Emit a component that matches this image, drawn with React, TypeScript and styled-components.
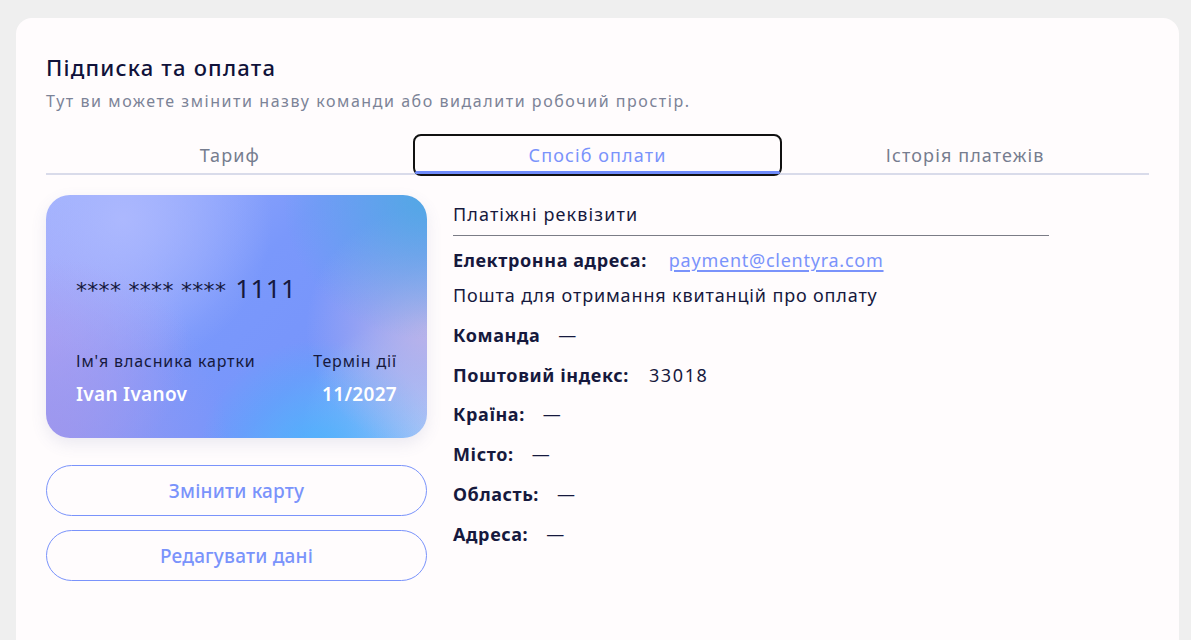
import React from "react";
import styled, { createGlobalStyle } from "styled-components";

const Global = createGlobalStyle`
  html, body { margin: 0; padding: 0; background: #efefef; }
  body { font-family: "Noto Sans", "Open Sans", sans-serif; }
  * { box-sizing: border-box; }
`;

const Page = styled.div`
  padding: 18px 12px 0 16px;
  height: 640px;
  overflow: hidden;
`;

const Panel = styled.section`
  background: #fffcfd;
  border-radius: 16px;
  padding: 34px 30px 60px 30px;
  min-height: 700px;
`;

const Title = styled.h1`
  margin: 0;
  font-size: 22px;
  font-weight: 500;
  color: #10123a;
  line-height: 30px;
  letter-spacing: 1.2px;
`;

const Subtitle = styled.p`
  margin: 8px 0 0;
  font-size: 16px;
  color: #7c8397;
  line-height: 22px;
  letter-spacing: 1.55px;
`;

const Tabs = styled.div`
  margin-top: 22px;
  display: grid;
  grid-template-columns: 1fr 1fr 1fr;
  border-bottom: 2px solid #d9dbea;
`;

const Tab = styled.button<{ $active?: boolean }>`
  font-family: inherit;
  background: transparent;
  border: ${(p) => (p.$active ? "2px solid #111" : "2px solid transparent")};
  border-radius: 8px;
  height: 42px;
  margin: 0 -1px -3px;
  font-size: 18px;
  letter-spacing: 1.1px;
  color: ${(p) => (p.$active ? "#7a93fb" : "#767d8f")};
  position: relative;
  cursor: pointer;
  &::after {
    content: "";
    display: ${(p) => (p.$active ? "block" : "none")};
    position: absolute;
    left: 0;
    right: 0;
    bottom: 0;
    height: 3px;
    background: #6f8bfa;
    border-radius: 2px;
  }
`;

const Body = styled.div`
  margin-top: 20px;
  display: flex;
  gap: 26px;
  align-items: flex-start;
`;

const LeftCol = styled.div`
  width: 381px;
  display: flex;
  flex-direction: column;
`;

const CreditCard = styled.div`
  height: 243px;
  border-radius: 24px;
  padding: 77px 30px 0 30px;
  box-shadow: 0 6px 16px rgba(90, 100, 160, 0.12);
  background:
    radial-gradient(circle at 100% 0%, rgba(78, 170, 226, 0.9) 0%, rgba(78, 170, 226, 0) 32%),
    radial-gradient(circle at 100% 55%, rgba(192, 180, 232, 0.9) 0%, rgba(192, 180, 232, 0) 30%),
    radial-gradient(circle at 0% 100%, rgba(160, 150, 236, 0.9) 0%, rgba(160, 150, 236, 0) 40%),
    radial-gradient(circle at 72% 110%, rgba(70, 180, 252, 0.95) 0%, rgba(70, 180, 252, 0) 32%),
    radial-gradient(circle at 100% 100%, rgba(170, 200, 248, 1) 0%, rgba(170, 200, 248, 0) 28%),
    radial-gradient(circle at 20% 10%, rgba(172, 184, 254, 1) 0%, rgba(172, 184, 254, 0) 40%),
    radial-gradient(circle at 0% 60%, rgba(174, 164, 246, 0.9) 0%, rgba(174, 164, 246, 0) 35%),
    linear-gradient(135deg, #9fb0fd 0%, #7a98fb 45%, #7795fb 70%, #8aaefb 100%);
`;

const CardNumber = styled.div`
  display: flex;
  align-items: baseline;
  gap: 9px;
  color: #16193d;
  line-height: 32px;
`;

const Stars = styled.span`
  font-size: 22px;
  letter-spacing: 0.3px;
  font-family: "DejaVu Sans", sans-serif;
`;

const Digits = styled.span`
  font-size: 26px;
  letter-spacing: 0.4px;
`;

const CardInfo = styled.div`
  margin-top: 42px;
  display: flex;
  justify-content: space-between;
`;

const InfoBlock = styled.div<{ $right?: boolean }>`
  display: flex;
  flex-direction: column;
  align-items: ${(p) => (p.$right ? "flex-end" : "flex-start")};
  gap: 8px;
`;

const InfoLabel = styled.span`
  font-size: 16px;
  color: #16193d;
  line-height: 24px;
  letter-spacing: 0.85px;
`;

const InfoValue = styled.span`
  font-size: 19px;
  font-weight: 600;
  color: #ffffff;
  line-height: 26px;
  letter-spacing: 0.3px;
`;

const OutlineButton = styled.button`
  font-family: inherit;
  margin-top: 14px;
  height: 51px;
  border-radius: 26px;
  border: 1px solid #7a93fb;
  background: transparent;
  color: #7a93fb;
  font-size: 19px;
  font-weight: 500;
  letter-spacing: 0.2px;
  cursor: pointer;
  &:first-of-type {
    margin-top: 27px;
  }
`;

const RightCol = styled.div`
  width: 596px;
  padding-top: 6px;
  display: flex;
  flex-direction: column;
`;

const SectionTitle = styled.div`
  font-size: 18px;
  color: #16193d;
  line-height: 26px;
  letter-spacing: 1.1px;
  padding-bottom: 8px;
  border-bottom: 1px solid #7b7c86;
`;

const Row = styled.div<{ $gap?: number; $top?: number }>`
  display: flex;
  align-items: baseline;
  gap: ${(p) => p.$gap ?? 18}px;
  margin-top: ${(p) => p.$top ?? 14}px;
  font-size: 18px;
  line-height: 26px;
  color: #16193d;
`;

const Label = styled.span`
  font-weight: 700;
  letter-spacing: 0.6px;
`;

const Value = styled.span`
  letter-spacing: 1.6px;
`;

const EmailLink = styled.a`
  color: #7a93fb;
  text-decoration: underline;
  text-underline-offset: 3px;
  text-decoration-thickness: 2px;
  letter-spacing: 0.75px;
`;

const Note = styled.div`
  margin-top: 9px;
  font-size: 18px;
  line-height: 26px;
  color: #16193d;
  letter-spacing: 0.85px;
`;

export default function App() {
  const rows: [string, string, number, number][] = [
    ["Команда", "—", 18, 14],
    ["Поштовий індекс:", "33018", 20, 14],
    ["Країна:", "—", 18, 13],
    ["Місто:", "—", 18, 14],
    ["Область:", "—", 18, 14],
    ["Адреса:", "—", 18, 14],
  ];
  return (
    <>
      <Global />
      <Page>
        <Panel>
          <Title>Підписка та оплата</Title>
          <Subtitle>Тут ви можете змінити назву команди або видалити робочий простір.</Subtitle>
          <Tabs>
            <Tab>Тариф</Tab>
            <Tab $active>Спосіб оплати</Tab>
            <Tab>Історія платежів</Tab>
          </Tabs>
          <Body>
            <LeftCol>
              <CreditCard>
                <CardNumber>
                  <Stars>**** **** ****</Stars>
                  <Digits>1111</Digits>
                </CardNumber>
                <CardInfo>
                  <InfoBlock>
                    <InfoLabel>Ім'я власника картки</InfoLabel>
                    <InfoValue>Ivan Ivanov</InfoValue>
                  </InfoBlock>
                  <InfoBlock $right>
                    <InfoLabel>Термін дії</InfoLabel>
                    <InfoValue>11/2027</InfoValue>
                  </InfoBlock>
                </CardInfo>
              </CreditCard>
              <OutlineButton>Змінити карту</OutlineButton>
              <OutlineButton>Редагувати дані</OutlineButton>
            </LeftCol>
            <RightCol>
              <SectionTitle>Платіжні реквізити</SectionTitle>
              <Row $gap={22} $top={11}>
                <Label>Електронна адреса:</Label>
                <EmailLink href="#">payment@clentyra.com</EmailLink>
              </Row>
              <Note>Пошта для отримання квитанцій про оплату</Note>
              {rows.map(([l, v, g, t]) => (
                <Row key={l} $gap={g} $top={t}>
                  <Label>{l}</Label>
                  <Value>{v}</Value>
                </Row>
              ))}
            </RightCol>
          </Body>
        </Panel>
      </Page>
    </>
  );
}
